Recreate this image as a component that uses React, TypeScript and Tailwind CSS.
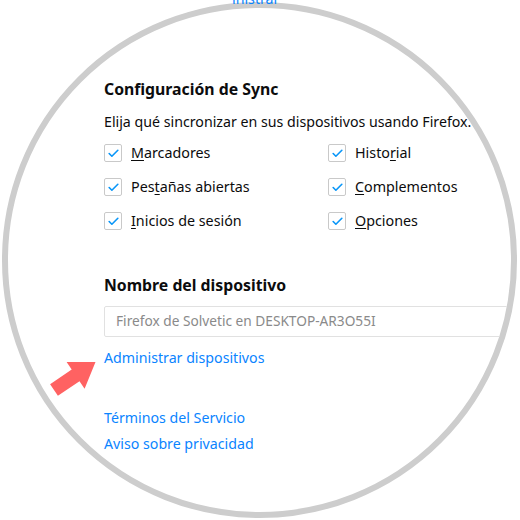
import { Check } from "lucide-react";

const font = { fontFamily: '"Noto Sans", "Segoe UI", sans-serif' };

type Item = { pre: string; key: string; post: string };

const items: Item[] = [
  { pre: "", key: "M", post: "arcadores" },
  { pre: "Histo", key: "r", post: "ial" },
  { pre: "Pes", key: "t", post: "añas abiertas" },
  { pre: "", key: "C", post: "omplementos" },
  { pre: "", key: "I", post: "nicios de sesión" },
  { pre: "", key: "O", post: "pciones" },
];

const CheckRow = ({ item }: { item: Item }) => (
  <div className="flex items-center h-[34px]">
    <span className="w-[18px] h-[18px] border border-[#c9c9c9] rounded-[2px] bg-white flex items-center justify-center">
      <Check size={13} strokeWidth={3} className="text-[#0996f8]" />
    </span>
    <span className="ml-[9px] text-[14.3px] leading-[20px] text-[#0c0c0d]">
      {item.pre}
      <span className="underline underline-offset-2">{item.key}</span>
      {item.post}
    </span>
  </div>
);

export default function App() {
  return (
    <div className="relative w-[520px] h-[520px] bg-white p-[2px] overflow-hidden" style={font}>
      <div className="w-[515px] h-[516px] rounded-full border-[6px] border-[#cdcdcd] overflow-hidden bg-white">
        <div className="flex flex-col pl-[96px] pt-[69px]">
          <h2 className="text-[15.8px] leading-[24px] font-bold text-[#0c0c0d]">Configuración de Sync</h2>
          <p className="mt-[11px] text-[14.2px] leading-[20px] text-[#0c0c0d]">
            Elija qué sincronizar en sus dispositivos usando Firefox.
          </p>
          <div className="mt-[4px] grid grid-cols-[224px_200px]">
            {items.map((it) => (
              <CheckRow key={it.key + it.post} item={it} />
            ))}
          </div>
          <h2 className="mt-[35px] text-[15.8px] leading-[24px] font-bold text-[#0c0c0d]">Nombre del dispositivo</h2>
          <div className="mt-[9px] w-[460px] h-[31px] border border-[#e1e1e1] rounded-[2px] flex items-center pl-[11px]">
            <span className="text-[13.7px] text-[#8a8a8a]">Firefox de Solvetic en DESKTOP-AR3O55I</span>
          </div>
          <a className="mt-[11px] text-[14.2px] leading-[20px] text-[#0a84ff]">Administrar dispositivos</a>
          <a className="mt-[40px] text-[14.2px] leading-[20px] text-[#0a84ff]">Términos del Servicio</a>
          <a className="mt-[6px] text-[14.2px] leading-[20px] text-[#0a84ff]">Aviso sobre privacidad</a>
        </div>
      </div>

      {/* clipped link from the section above */}
      <span className="absolute top-[-11px] left-[232px] text-[14.2px] leading-[20px] text-[#0a84ff]">inistrar</span>

      {/* annotation arrow */}
      <svg className="absolute left-0 top-0 w-[520px] h-[520px] pointer-events-none" viewBox="0 0 520 520">
        <polygon
          points="95.5,362 66.6,362.1 71.7,369.6 50.1,384.2 57.9,395.8 79.5,381.2 84.6,388.7"
          fill="#ff6262"
        />
      </svg>
    </div>
  );
}
